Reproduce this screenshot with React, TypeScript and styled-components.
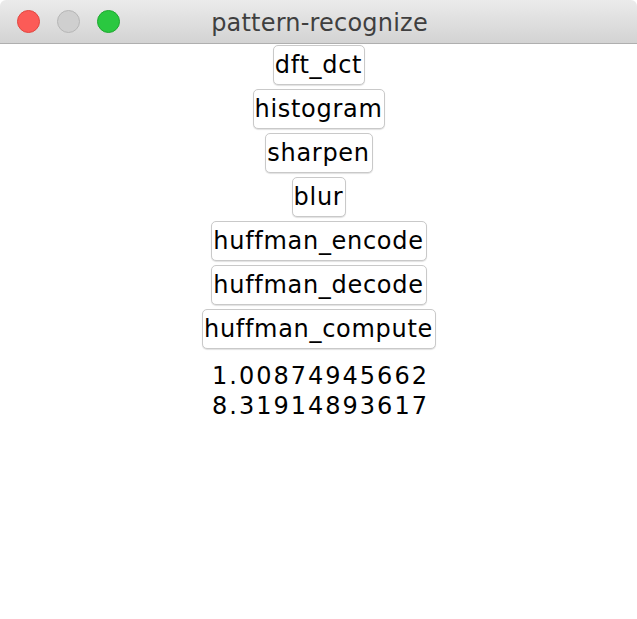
import React from "react";
import styled, { createGlobalStyle } from "styled-components";

const Global = createGlobalStyle`
  html, body {
    margin: 0;
    padding: 0;
    background: #ffffff;
  }
  body {
    font-family: "DejaVu Sans", "Liberation Sans", sans-serif;
  }
`;

const Window = styled.div`
  width: 637px;
  height: 619px;
  background: #ffffff;
  display: flex;
  flex-direction: column;
  overflow: hidden;
`;

const TitleBar = styled.div`
  height: 43px;
  flex: none;
  display: grid;
  grid-template-columns: 1fr auto 1fr;
  align-items: center;
  background: linear-gradient(#ebebeb, #d3d3d3);
  border-bottom: 1px solid #afafaf;
  border-radius: 6px 6px 0 0;
`;

const Lights = styled.div`
  display: flex;
  gap: 17px;
  padding-left: 17px;
  padding-bottom: 1px;
`;

const Light = styled.span<{ $fill: string; $edge: string }>`
  width: 23px;
  height: 23px;
  border-radius: 50%;
  box-sizing: border-box;
  background: ${(p) => p.$fill};
  border: 1px solid ${(p) => p.$edge};
`;

const Title = styled.div`
  font-family: "DejaVu Sans", "Liberation Sans", sans-serif;
  font-size: 24px;
  color: #3f3f3f;
  letter-spacing: 0.2px;
  padding-top: 3px;
  padding-left: 2px;
`;

const Content = styled.div`
  display: flex;
  flex-direction: column;
  align-items: center;
  gap: 4px;
  padding-top: 1px;
`;

const Button = styled.button`
  height: 40px;
  box-sizing: border-box;
  padding: 0 2px 0 1px;
  margin: 0 0 0 1px;
  background: #ffffff;
  border: 1px solid #c9c9c9;
  border-radius: 5px;
  box-shadow: 0 1px 1px rgba(0, 0, 0, 0.12);
  font-family: "DejaVu Sans", "Liberation Sans", sans-serif;
  font-size: 24px;
  letter-spacing: 0.7px;
  color: #000000;
  line-height: 1;
  cursor: default;
`;

const Output = styled.div`
  margin-top: 8px;
  display: flex;
  flex-direction: column;
  align-items: center;
  font-family: "DejaVu Sans", "Liberation Sans", sans-serif;
  font-size: 24px;
  line-height: 30px;
  letter-spacing: 2px;
  color: #000000;
  padding-left: 4px;
`;

const buttons = [
  "dft_dct",
  "histogram",
  "sharpen",
  "blur",
  "huffman_encode",
  "huffman_decode",
  "huffman_compute",
];

export default function App() {
  return (
    <>
      <Global />
      <Window>
        <TitleBar>
          <Lights>
            <Light $fill="#fc5b57" $edge="#e2463f" />
            <Light $fill="#cfcfcf" $edge="#b6b6b6" />
            <Light $fill="#2ac840" $edge="#1ea82f" />
          </Lights>
          <Title>pattern-recognize</Title>
          <div />
        </TitleBar>
        <Content>
          {buttons.map((b) => (
            <Button key={b}>{b}</Button>
          ))}
          <Output>
            <span>1.00874945662</span>
            <span>8.31914893617</span>
          </Output>
        </Content>
      </Window>
    </>
  );
}
